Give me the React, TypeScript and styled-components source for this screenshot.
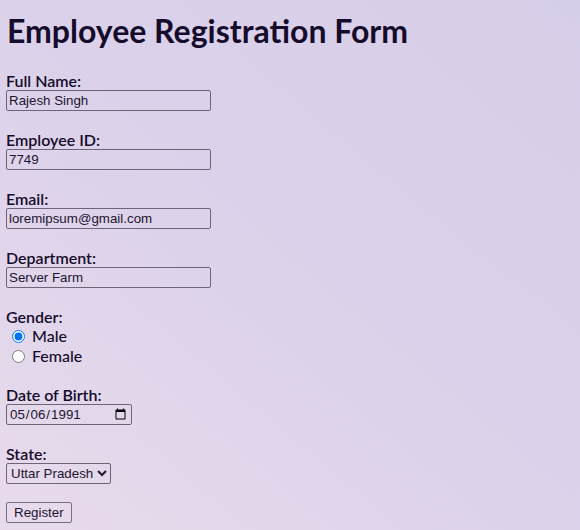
import React from "react";
import styled, { createGlobalStyle } from "styled-components";

const Global = createGlobalStyle`
  html, body { margin: 0; padding: 0; }
  body {
    min-height: 530px;
    background: linear-gradient(40deg, #e8dbec 0%, #dcd2ea 45%, #d6cde8 100%);
    color: #150c2b;
    font-family: Lato, "Noto Sans", sans-serif;
  }
`;

const Page = styled.div`
  padding: 12px 6px 0 6px;
`;

const Title = styled.h1`
  margin: 0 0 22px 1px;
  font-size: 32px;
  line-height: 38px;
  font-weight: 700;
  letter-spacing: 0;
`;

const Form = styled.form`
  display: flex;
  flex-direction: column;
`;

const Field = styled.div<{ $gap?: number }>`
  display: flex;
  flex-direction: column;
  align-items: flex-start;
  margin-bottom: ${(p) => p.$gap ?? 20}px;
`;

const Label = styled.label`
  font-size: 16px;
  line-height: 18px;
  font-weight: 600;
`;

const TextInput = styled.input`
  box-sizing: border-box;
  width: 205px;
  height: 21px;
  margin: 0;
  padding: 1px 2px;
  background: transparent;
  border: 1px solid #6e6678;
  border-radius: 2px;
  font-family: "Liberation Sans", Arial, sans-serif;
  font-size: 13.33px;
  color: #1d1530;
`;

const DateInput = styled(TextInput)`
  width: 126px;
`;

const Select = styled.select`
  box-sizing: border-box;
  height: 21px;
  margin: 0;
  background: transparent;
  border: 1px solid #6e6678;
  border-radius: 2px;
  font-family: "Liberation Sans", Arial, sans-serif;
  font-size: 13.33px;
  color: #1d1530;
`;

const RadioRow = styled.label`
  display: flex;
  align-items: center;
  font-size: 16px;
  line-height: 20px;
  font-weight: 500;
`;

const Radio = styled.input`
  margin: 0 7px 0 6px;
  width: 13px;
  height: 13px;
`;

const Button = styled.button`
  align-self: flex-start;
  box-sizing: border-box;
  height: 21px;
  padding: 1px 7px;
  margin: 0;
  background: transparent;
  border: 1px solid #777080;
  border-radius: 2px;
  font-family: "Liberation Sans", Arial, sans-serif;
  font-size: 13.33px;
  color: #1d1530;
`;

export default function App() {
  return (
    <>
      <Global />
      <Page>
        <Title>Employee Registration Form</Title>
        <Form onSubmit={(e) => e.preventDefault()}>
          <Field>
            <Label htmlFor="name">Full Name:</Label>
            <TextInput id="name" defaultValue="Rajesh Singh" />
          </Field>
          <Field>
            <Label htmlFor="eid">Employee ID:</Label>
            <TextInput id="eid" defaultValue="7749" />
          </Field>
          <Field>
            <Label htmlFor="email">Email:</Label>
            <TextInput id="email" defaultValue="loremipsum@gmail.com" />
          </Field>
          <Field>
            <Label htmlFor="dept">Department:</Label>
            <TextInput id="dept" defaultValue="Server Farm" />
          </Field>
          <Field>
            <Label>Gender:</Label>
            <RadioRow>
              <Radio type="radio" name="g" defaultChecked />
              Male
            </RadioRow>
            <RadioRow>
              <Radio type="radio" name="g" />
              Female
            </RadioRow>
          </Field>
          <Field>
            <Label htmlFor="dob">Date of Birth:</Label>
            <DateInput id="dob" type="date" defaultValue="1991-05-06" />
          </Field>
          <Field $gap={18}>
            <Label htmlFor="state">State:</Label>
            <Select id="state" defaultValue="UP">
              <option value="UP">Uttar Pradesh</option>
              <option value="MH">Maharashtra</option>
              <option value="DL">Delhi</option>
            </Select>
          </Field>
          <Button type="submit">Register</Button>
        </Form>
      </Page>
    </>
  );
}
